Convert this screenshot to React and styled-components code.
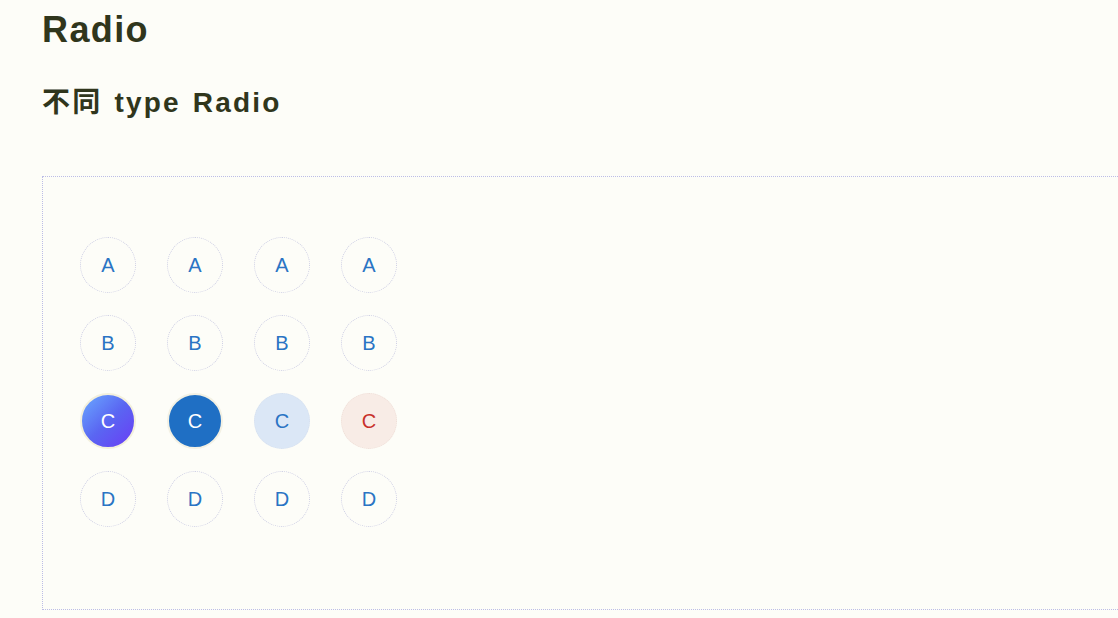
import React from "react";
import styled, { createGlobalStyle } from "styled-components";

const GlobalStyle = createGlobalStyle`
    html, body {
        margin: 0;
        padding: 0;
        overflow: hidden;
        background: #fdfdf8;
        font-family: "Liberation Sans", Arial, "Noto Sans CJK SC", sans-serif;
    }
`;

const Page = styled.div`
    padding: 8px 0 0 42px;
    width: 1140px;
`;

const Title = styled.h1`
    margin: 0;
    font-size: 36px;
    line-height: 44px;
    font-weight: bold;
    letter-spacing: 1.4px;
    color: #30361c;
`;

const SubTitle = styled.h2`
    margin: 34px 0 0;
    font-size: 28px;
    line-height: 34px;
    font-weight: bold;
    letter-spacing: 2.2px;
    word-spacing: 2px;
    color: #30361c;
`;

const Demo = styled.div`
    margin-top: 56px;
    border: 1px dotted #bcbde6;
    border-right: none;
    padding: 60px 0 82px 37px;
`;

const Grid = styled.div`
    display: grid;
    grid-template-columns: repeat(4, 56px);
    column-gap: 31px;
    row-gap: 22px;
`;

const variants = {
    plain: { bg: "transparent", color: "#2a74c4", border: "1px dotted #cdcee4" },
    gradient: { bg: "linear-gradient(135deg, #6aaaff 0%, #5a66f2 50%, #6a3cf5 100%)", color: "#fff", border: "2px solid #f3f0dc" },
    primary: { bg: "#1f6fc4", color: "#fff", border: "2px solid #f3f1e4" },
    light: { bg: "#dbe7f6", color: "#2a74c4", border: "1px dotted #d6e0ef" },
    warn: { bg: "#f8ece6", color: "#c8302a", border: "1px dotted #efdfd8" },
};

const Option = styled.div`
    width: 56px;
    height: 56px;
    box-sizing: border-box;
    border-radius: 50%;
    display: flex;
    align-items: center;
    justify-content: center;
    font-size: 20px;
    border: ${p => variants[p.$variant].border};
    background: ${p => variants[p.$variant].bg};
    color: ${p => variants[p.$variant].color};
`;

const rows = [
    { label: "A", types: ["plain", "plain", "plain", "plain"] },
    { label: "B", types: ["plain", "plain", "plain", "plain"] },
    { label: "C", types: ["gradient", "primary", "light", "warn"] },
    { label: "D", types: ["plain", "plain", "plain", "plain"] },
];

export default function App() {
    return (
        <Page>
            <GlobalStyle />
            <Title>Radio</Title>
            <SubTitle>不同 type Radio</SubTitle>
            <Demo>
                <Grid>
                    {rows.map(row =>
                        row.types.map((t, i) => (
                            <Option key={row.label + i} $variant={t}>{row.label}</Option>
                        ))
                    )}
                </Grid>
            </Demo>
        </Page>
    );
}
